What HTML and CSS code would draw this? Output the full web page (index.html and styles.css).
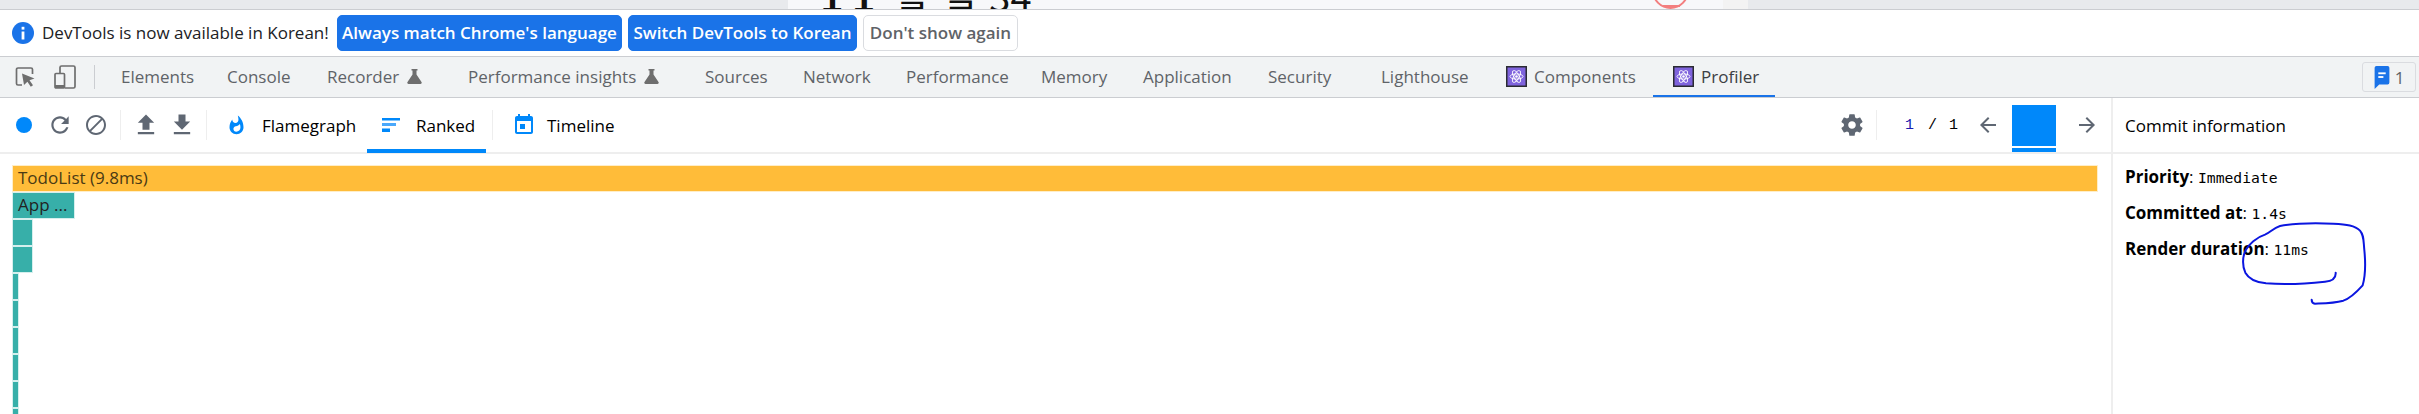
FILE: index.html
```html
<!DOCTYPE html>
<html lang="en">
<head>
<meta charset="utf-8">
<title>DevTools Profiler</title>
<link rel="stylesheet" href="styles.css">
</head>
<body>
<div class="page-strip">
  <div class="strip-left"></div>
  <div class="strip-page">
    <span class="strip-title">1 1 <span class="strip-ko">할 일 34</span></span>
    <span class="strip-circle"><span class="strip-minus"></span></span>
  </div>
  <div class="strip-gutter"></div>
  <div class="strip-right"></div>
</div>

<div class="infobar">
  <svg class="info-icon" viewBox="0 0 22 22"><circle cx="11" cy="11" r="11" fill="#1a73e8"/><rect x="9.6" y="9.5" width="2.8" height="8" fill="#fff"/><rect x="9.6" y="4.8" width="2.8" height="2.8" fill="#fff"/></svg>
  <span class="info-text">DevTools is now available in Korean!</span>
  <button class="btn btn-primary btn-match">Always match Chrome's language</button>
  <button class="btn btn-primary btn-switch">Switch DevTools to Korean</button>
  <button class="btn btn-plain">Don't show again</button>
</div>

<div class="tabbar">
  <svg class="tb-inspect" width="20" height="20" viewBox="0 0 20 20"><path d="M7 18H3a1.5 1.5 0 0 1-1.5-1.5v-14A1.5 1.5 0 0 1 3 1h13a1.5 1.5 0 0 1 1.5 1.5V7" fill="none" stroke="#6e6e6e" stroke-width="1.7"/><path d="M7 6.500l12.500 5-5 1.800 3.500 5-2.200 1.500-3.400-5-3.400 3.200z" fill="#6e6e6e"/></svg>
  <svg class="tb-device" width="22" height="24" viewBox="0 0 22 24"><path d="M6 8V2.500A1.500 1.500 0 0 1 7.500 1h12A1.500 1.500 0 0 1 21 2.500v19a1.500 1.500 0 0 1-1.500 1.500H11" fill="none" stroke="#6e6e6e" stroke-width="1.700"/><rect x="1" y="8.500" width="9.500" height="14.500" rx="1" fill="none" stroke="#6e6e6e" stroke-width="1.700"/><rect x="1" y="20" width="9.500" height="3" fill="#6e6e6e"/></svg>
  <span class="tb-sep"></span>
  <span class="tab t-elements">Elements</span>
  <span class="tab t-console">Console</span>
  <span class="tab t-recorder">Recorder<svg class="flask" viewBox="0 0 15 15"><path d="M4.500 0h6v1.500H9.500v4l5 7.500a1.300 1.300 0 0 1-1 2h-12a1.300 1.300 0 0 1-1-2l5-7.500v-4H4.500z" fill="#6e6e6e"/></svg></span>
  <span class="tab t-insights">Performance insights<svg class="flask" viewBox="0 0 15 15"><path d="M4.500 0h6v1.500H9.500v4l5 7.500a1.300 1.300 0 0 1-1 2h-12a1.300 1.300 0 0 1-1-2l5-7.500v-4H4.500z" fill="#6e6e6e"/></svg></span>
  <span class="tab t-sources">Sources</span>
  <span class="tab t-network">Network</span>
  <span class="tab t-performance">Performance</span>
  <span class="tab t-memory">Memory</span>
  <span class="tab t-application">Application</span>
  <span class="tab t-security">Security</span>
  <span class="tab t-lighthouse">Lighthouse</span>
  <span class="tab t-components">
    <svg class="react-icon" viewBox="0 0 21 21"><rect x=".75" y=".75" width="19.500" height="19.500" fill="#7f63dd" stroke="#2b2b33" stroke-width="1.500"/><g fill="none" stroke="#fff" stroke-width=".9"><ellipse cx="10.500" cy="10.500" rx="6.500" ry="2.600"/><ellipse cx="10.500" cy="10.500" rx="6.500" ry="2.600" transform="rotate(60 10.500 10.500)"/><ellipse cx="10.500" cy="10.500" rx="6.500" ry="2.600" transform="rotate(120 10.500 10.500)"/></g><circle cx="10.500" cy="10.500" r="1.300" fill="#fff"/></svg>
    Components
  </span>
  <span class="tab t-profiler active">
    <svg class="react-icon" viewBox="0 0 21 21"><rect x=".75" y=".75" width="19.500" height="19.500" fill="#7f63dd" stroke="#2b2b33" stroke-width="1.500"/><g fill="none" stroke="#fff" stroke-width=".9"><ellipse cx="10.500" cy="10.500" rx="6.500" ry="2.600"/><ellipse cx="10.500" cy="10.500" rx="6.500" ry="2.600" transform="rotate(60 10.500 10.500)"/><ellipse cx="10.500" cy="10.500" rx="6.500" ry="2.600" transform="rotate(120 10.500 10.500)"/></g><circle cx="10.500" cy="10.500" r="1.300" fill="#fff"/></svg>
    Profiler
  </span>
  <span class="issues">
    <svg width="16" height="26" viewBox="0 0 16 26"><path d="M2 1h12a2 2 0 0 1 2 2v16a2 2 0 0 1-2 2H5l-5 5V3a2 2 0 0 1 2-2z" fill="#1a73e8"/><rect x="4" y="8" width="8" height="2" fill="#fff"/><rect x="4" y="12" width="5.500" height="2" fill="#fff"/></svg>
    <span>1</span>
  </span>
</div>

<div class="main">
  <div class="profiler">
    <div class="toolbar">
      <span class="tool"><span class="record"></span></span>
      <span class="tool"><svg class="ic ic-reload" viewBox="0 0 24 24"><path d="M17.650 6.350C16.200 4.900 14.210 4 12 4c-4.420 0-7.990 3.580-7.990 8s3.570 8 7.990 8c3.730 0 6.840-2.550 7.730-6h-2.080c-.82 2.330-3.040 4-5.650 4-3.310 0-6-2.690-6-6s2.690-6 6-6c1.660 0 3.140.69 4.220 1.780L13 11h7V4l-2.350 2.350z"/></svg></span>
      <span class="tool"><svg class="ic" viewBox="0 0 24 24"><path d="M12 2C6.480 2 2 6.480 2 12s4.480 10 10 10 10-4.480 10-10S17.520 2 12 2zM4 12c0-4.420 3.580-8 8-8 1.850 0 3.550.63 4.900 1.690L5.690 16.900C4.630 15.550 4 13.850 4 12zm8 8c-1.850 0-3.550-.63-4.900-1.690L18.310 7.100C19.370 8.450 20 10.150 20 12c0 4.420-3.580 8-8 8z"/></svg></span>
      <span class="sep"></span>
      <span class="tool"><svg class="ic ic-transfer" viewBox="0 0 24 24"><path d="M9 16h6v-6h4l-7-7-7 7h4zm-4 2h14v2H5z"/></svg></span>
      <span class="tool"><svg class="ic ic-transfer" viewBox="0 0 24 24"><path d="M19 9h-4V3H9v6H5l7 7 7-7zM5 18v2h14v-2H5z"/></svg></span>
      <span class="sep"></span>
      <span class="mode mode-flame"><svg class="mode-ic flame" viewBox="0 0 24 24"><path d="M13.500.67s.74 2.650.74 4.800c0 2.060-1.350 3.730-3.410 3.730-2.070 0-3.630-1.670-3.630-3.730l.03-.36C5.210 7.510 4 10.620 4 14c0 4.420 3.580 8 8 8s8-3.580 8-8C20 8.610 17.410 3.800 13.500.67zM11.710 19c-1.780 0-3.220-1.400-3.220-3.140 0-1.620 1.050-2.760 2.810-3.120 1.770-.36 3.600-1.210 4.620-2.580.39 1.290.59 2.650.59 4.040 0 2.650-2.150 4.800-4.800 4.800z"/></svg>Flamegraph</span>
      <span class="mode mode-ranked selected"><svg class="ranked-ic" viewBox="0 0 18 14"><rect width="18" height="2.500" fill="#0088fa"/><rect y="5" width="14" height="3" fill="#4aa8fb"/><rect y="10.500" width="8" height="3.500" fill="#0088fa"/></svg>Ranked</span>
      <span class="sep"></span>
      <span class="mode mode-timeline"><svg class="mode-ic calendar" viewBox="0 0 24 24"><path d="M19 3h-1V1h-2v2H8V1H6v2H5c-1.100 0-2 .9-2 2v14c0 1.100.9 2 2 2h14c1.100 0 2-.9 2-2V5c0-1.100-.9-2-2-2zm0 16H5V8h14v11zM8 11h5v5H8z"/></svg>Timeline</span>
      <span class="tool gear"><svg class="ic gear-ic" viewBox="0 0 24 24"><path d="M19.430 12.980c.04-.32.07-.64.07-.98s-.03-.66-.07-.98l2.110-1.650c.19-.15.24-.42.12-.64l-2-3.460c-.12-.22-.39-.3-.61-.22l-2.490 1c-.52-.4-1.080-.73-1.690-.98l-.38-2.650C14.460 2.180 14.250 2 14 2h-4c-.25 0-.46.18-.49.42l-.38 2.650c-.61.25-1.170.59-1.690.98l-2.490-1c-.23-.09-.49 0-.61.22l-2 3.460c-.13.22-.07.49.12.64l2.110 1.650c-.04.32-.07.65-.07.98s.03.66.07.98l-2.110 1.650c-.19.15-.24.42-.12.64l2 3.460c.12.22.39.3.61.22l2.490-1c.52.4 1.080.73 1.690.98l.38 2.650c.03.24.24.42.49.42h4c.25 0 .46-.18.49-.42l.38-2.650c.61-.25 1.170-.59 1.690-.98l2.490 1c.23.09.49 0 .61-.22l2-3.460c.12-.22.07-.49-.12-.64l-2.110-1.650zM12 15.500c-1.930 0-3.500-1.570-3.500-3.500s1.570-3.500 3.500-3.500 3.500 1.570 3.500 3.500-1.570 3.500-3.500 3.500z"/></svg></span>
      <span class="sep sep-commit"></span>
      <span class="commit-count"><span class="count-current">1</span><span class="count-slash">/</span><span>1</span></span>
      <span class="tool arrow-left"><svg class="ic" viewBox="0 0 24 24"><path d="M20 11H7.830l5.590-5.590L12 4l-8 8 8 8 1.410-1.410L7.830 13H20v-2z"/></svg></span>
      <span class="commit-bar"><span class="commit-fill"></span><span class="commit-line"></span></span>
      <span class="tool arrow-right"><svg class="ic" viewBox="0 0 24 24"><path d="M12 4l-1.410 1.410L16.170 11H4v2h12.170l-5.580 5.590L12 20l8-8z"/></svg></span>
    </div>
    <div class="chart">
      <div class="bar bar-root" style="width:2086px">TodoList (9.8ms)</div>
      <div class="bar" style="width:63px">App ...</div>
      <div class="bar" style="width:21px"></div>
      <div class="bar" style="width:21px"></div>
      <div class="bar" style="width:7px"></div>
      <div class="bar" style="width:7px"></div>
      <div class="bar" style="width:7px"></div>
      <div class="bar" style="width:7px"></div>
      <div class="bar" style="width:7px"></div>
      <div class="bar" style="width:7px"></div>
    </div>
  </div>
  <aside class="panel">
    <div class="panel-head">Commit information</div>
    <div class="panel-body">
      <div class="row"><b>Priority</b>: <code>Immediate</code></div>
      <div class="row"><b>Committed at</b>: <code>1.4s</code></div>
      <div class="row"><b>Render duration</b>: <code>11ms</code></div>
    </div>
  </aside>
</div>

<svg class="scribble" viewBox="0 0 1077 540"><path d="M827 398C828 412 818 423 795 425C740 431 670 434 618 430C590 427 568 420 556 398C546 378 548 350 556 332C566 312 590 292 615 284C630 278 640 264 660 258C700 250 770 249 820 251C860 253 885 256 900 272C912 286 910 300 913 330C917 370 917 405 908 436C890 456 870 475 850 482C820 490 790 490 765 491C757 490 755 485 755 479" fill="none" stroke="#0b16e0" stroke-width="6" stroke-linecap="round" stroke-linejoin="round"/></svg>
</body>
</html>
```
FILE: styles.css
```css
* { box-sizing: border-box; }
html, body { margin: 0; padding: 0; }
body {
  width: 2419px;
  height: 414px;
  overflow: hidden;
  background: #fff;
  font-family: "Open Sans", "Noto Sans", sans-serif;
  font-size: 17px;
  color: #000;
  position: relative;
}

/* clipped page behind devtools */
.page-strip {
  display: flex;
  height: 10px;
  overflow: hidden;
  border-bottom: 1px solid #cbcdd1;
  background: #e8eaed;
}
.strip-left { width: 788px; }
.strip-page {
  width: 935px;
  background: #f7f8fa;
  display: flex;
  align-items: flex-end;
  position: relative;
}
.strip-gutter { width: 25px; background: #f3f3f3; }
.strip-right { flex: 1; }
.strip-title {
  margin-left: 33px;
  margin-bottom: -9px;
  font: 700 38px/38px "Liberation Sans", sans-serif;
  color: #111;
  white-space: nowrap;
}
.strip-ko {
  margin-left: 10px;
  font: 400 38px/38px "Noto Sans CJK KR", sans-serif;
  word-spacing: 4px;
}
.strip-circle {
  position: absolute;
  left: 864px;
  bottom: 0;
  width: 37px;
  height: 37px;
  border: 2px solid #f37f7f;
  border-radius: 50%;
}
.strip-minus {
  position: absolute;
  left: 9px;
  bottom: 0;
  width: 17px;
  height: 2px;
  background: #f37f7f;
}

/* infobar */
.infobar {
  height: 47px;
  display: flex;
  align-items: center;
  padding: 0 0 1px 12px;
  border-bottom: 1px solid #cbcdd1;
}
.info-icon { width: 22px; height: 22px; flex: none; margin-right: 8px; }
.info-text { width: 295px; color: #202124; white-space: nowrap; font-size: 17px; }
.btn {
  height: 36px;
  padding: 0;
  border-radius: 5px;
  font-family: inherit;
  font-size: 17px;
  white-space: nowrap;
  cursor: pointer;
}
.btn-primary {
  background: #1a73e8;
  border: 1px solid #1a73e8;
  color: #fff;
  font-weight: 600;
  margin-right: 6px;
}
.btn-match { width: 285px; }
.btn-switch { width: 229px; }
.btn-plain {
  width: 155px;
  background: #fff;
  border: 1px solid #dadce0;
  color: #5f6368;
  font-weight: 600;
}

/* devtools tabs */
.tabbar {
  height: 41px;
  display: flex;
  align-items: center;
  background: #f1f3f4;
  border-bottom: 1px solid #cbcdd1;
  position: relative;
  padding-left: 15px;
}
.tb-inspect { flex: none; margin-right: 19px; }
.tb-device { flex: none; margin-right: 18px; }
.tb-sep { width: 1px; height: 24px; background: #cbcdd1; flex: none; margin-right: 26px; }
.tab {
  height: 40px;
  display: flex;
  align-items: center;
  padding-bottom: 2px;
  color: #5f6368;
  white-space: nowrap;
  flex: none;
  position: relative;
}
.t-elements { width: 106px; }
.t-console { width: 100px; }
.t-recorder { width: 141px; }
.t-insights { width: 237px; }
.t-sources { width: 98px; }
.t-network { width: 103px; }
.t-performance { width: 135px; }
.t-memory { width: 102px; }
.t-application { width: 125px; }
.t-security { width: 113px; }
.t-lighthouse { width: 125px; }
.t-components { width: 147px; gap: 7px; }
.t-profiler { width: 122px; gap: 7px; padding-left: 20px; color: #3c4043; }
.t-profiler.active::after {
  content: "";
  position: absolute;
  left: 0;
  right: 0;
  bottom: 0;
  height: 2px;
  background: #1a73e8;
}
.flask { width: 15px; height: 15px; margin-left: 8px; }
.react-icon { width: 21px; height: 21px; flex: none; }
.issues {
  margin-left: auto;
  margin-right: 3px;
  width: 54px;
  height: 30px;
  border: 1px solid #dadce0;
  border-radius: 3px;
  display: flex;
  align-items: center;
  justify-content: center;
  gap: 5px;
  color: #5f6368;
}
.issues svg { width: 16px; height: 24px; }

/* main */
.main { display: flex; height: 317px; overflow: hidden; }
.profiler { width: 2111px; flex: none; }
.toolbar {
  height: 56px;
  display: flex;
  align-items: center;
  padding: 0 10px 0 6px;
  border-bottom: 2px solid #eeeeee;
  position: relative;
}
.tool { width: 36px; height: 36px; display: flex; align-items: center; justify-content: center; flex: none; }
.ic { width: 24px; height: 24px; fill: #5f6773; flex: none; }
.ic-reload { width: 26px; height: 26px; }
.ic-transfer { width: 28px; height: 28px; }
.record { width: 16px; height: 16px; border-radius: 50%; background: #0088fa; }
.sep { width: 1px; height: 30px; background: #eeeeee; margin: 0 7px 0 6px; flex: none; }
.mode {
  display: flex;
  align-items: center;
  height: 54px;
  color: #000;
  white-space: nowrap;
  position: relative;
  flex: none;
}
.mode-flame { width: 153px; padding-left: 12px; }
.mode-ranked { width: 119px; padding-left: 15px; }
.mode-timeline { padding-left: 12px; }
.mode-ic { fill: #0088fa; flex: none; }
.flame { width: 21px; height: 21px; margin-right: 15px; }
.calendar { width: 24px; height: 24px; margin-right: 11px; }
.ranked-ic { width: 18px; height: 14px; flex: none; margin-right: 16px; }
.mode.selected::after {
  content: "";
  position: absolute;
  left: 0;
  right: 0;
  bottom: -1px;
  height: 4px;
  background: #0088fa;
}
.gear { margin-left: auto; }
.gear-ic { width: 26px; height: 26px; }
.sep-commit { margin: 0 5px 0 6px; }
.commit-count {
  display: flex;
  width: 92px;
  padding-left: 23px;
  font: 15px "Liberation Mono", monospace;
  color: #000;
  flex: none;
}
.count-current { color: #1a1ab0; }
.count-slash { margin: 0 12px 0 14px; }
.arrow-left { width: 28px; }
.commit-bar {
  width: 44px;
  height: 47px;
  margin: 0 17px 0 10px;
  display: flex;
  flex-direction: column;
  align-self: flex-end;
  flex: none;
}
.commit-fill { height: 41px; background: #0088fa; }
.commit-line { height: 4px; margin-top: 2px; background: #0088fa; }
.arrow-right { width: 28px; }

.chart { padding: 11px 0 0 12px; }
.bar {
  height: 27px;
  background: #37afa9;
  border: 1px solid #d5efed;
  padding-left: 5px;
  line-height: 24px;
  color: #222;
  font-size: 17px;
  overflow: hidden;
  white-space: nowrap;
}
.bar-root { background: #ffbc39; border-color: #ffeec8; color: #4a3a14; }

.panel { flex: 1; border-left: 2px solid #eeeeee; }
.panel-head {
  height: 56px;
  display: flex;
  align-items: center;
  padding-left: 12px;
  border-bottom: 2px solid #eeeeee;
  white-space: nowrap;
}
.panel-body { padding: 5px 0 0 12px; }
.row { height: 36px; line-height: 36px; white-space: nowrap; font-size: 17px; }
.row b { font-weight: 700; }
.row code { font: 14.700px "DejaVu Sans Mono", monospace; }

.scribble {
  position: absolute;
  left: 2060px;
  top: 140px;
  width: 359px;
  height: 180px;
  pointer-events: none;
}
```
